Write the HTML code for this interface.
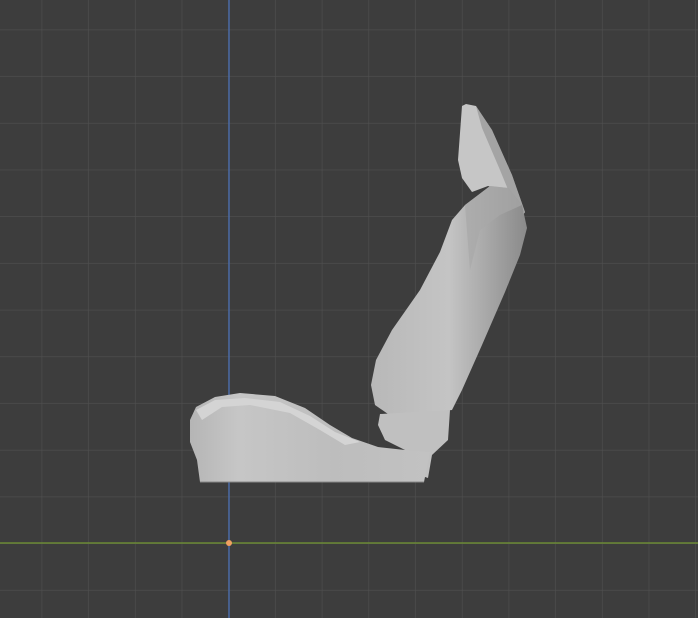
<!DOCTYPE html>
<html><head><style>
html,body{margin:0;padding:0;background:#3d3d3d;width:698px;height:618px;overflow:hidden}
</style></head><body>
<svg width="698" height="618" viewBox="0 0 698 618" xmlns="http://www.w3.org/2000/svg">
<defs>
<pattern id="g" x="-4.5" y="-16.5" width="46.7" height="46.7" patternUnits="userSpaceOnUse">
<path d="M46.7 0V46.7M0 46.7H46.7" stroke="#505050" stroke-width="1.2" fill="none"/>
</pattern>
<linearGradient id="bk" x1="0" y1="0" x2="1" y2="0">
<stop offset="0" stop-color="#b8b8b8"/><stop offset="0.5" stop-color="#c4c4c4"/><stop offset="1" stop-color="#8a8a8a"/>
</linearGradient>
<linearGradient id="bs" x1="0" y1="0" x2="1" y2="0">
<stop offset="0" stop-color="#b5b5b5"/><stop offset="0.2" stop-color="#c6c6c6"/><stop offset="0.6" stop-color="#bdbdbd"/><stop offset="1" stop-color="#c2c2c2"/>
</linearGradient>
</defs>
<rect width="698" height="618" fill="#3d3d3d"/>
<rect width="698" height="618" fill="url(#g)"/>
<line x1="0" y1="543" x2="698" y2="543" stroke="#6b8a35" stroke-width="1.5"/>
<line x1="229" y1="0" x2="229" y2="618" stroke="#4a6aa5" stroke-width="1.5"/>
<!-- headrest -->
<path d="M462 106 L466 104 L476 106 L492 130 L512 175 L525 212 L520 220 L505 190 L488 186 L472 192 L462 178 L458 160 Z" fill="#c6c6c6"/>
<path d="M476 106 L492 130 L512 175 L525 212 L518 214 L500 170 L482 128 Z" fill="#8e8e8e" opacity="0.6"/>
<!-- backrest -->
<path d="M490 186 L508 188 L522 205 L527 228 L520 255 L505 292 L482 345 L462 390 L452 410 L425 413 L388 414 L375 405 L371 385 L376 360 L392 330 L420 290 L440 252 L452 220 L465 205 Z" fill="url(#bk)"/>
<path d="M465 205 L490 186 L508 188 L522 205 L500 215 L480 230 L470 270 Z" fill="#a8a8a8" opacity="0.7"/>
<!-- bracket -->
<path d="M380 414 L450 410 L448 440 L432 455 L428 478 L405 470 L392 452 L405 450 L385 440 L378 425 Z" fill="#c0c0c0"/>
<!-- base -->
<path d="M190 420 L196 407 L215 397 L240 393 L275 396 L305 408 L330 425 L352 438 L378 447 L405 450 L430 452 L424 482 L380 482 L200 482 L197 460 L190 442 Z" fill="url(#bs)"/>
<path d="M196 410 L215 400 L245 398 L280 402 L310 416 L335 432 L360 442 L345 445 L320 430 L290 413 L250 405 L222 407 L202 420 Z" fill="#d4d4d4"/>
<path d="M200 482 L424 482" stroke="#888" stroke-width="1"/>
<circle cx="229" cy="543" r="3" fill="#f0a060"/>
</svg>
</body></html>
